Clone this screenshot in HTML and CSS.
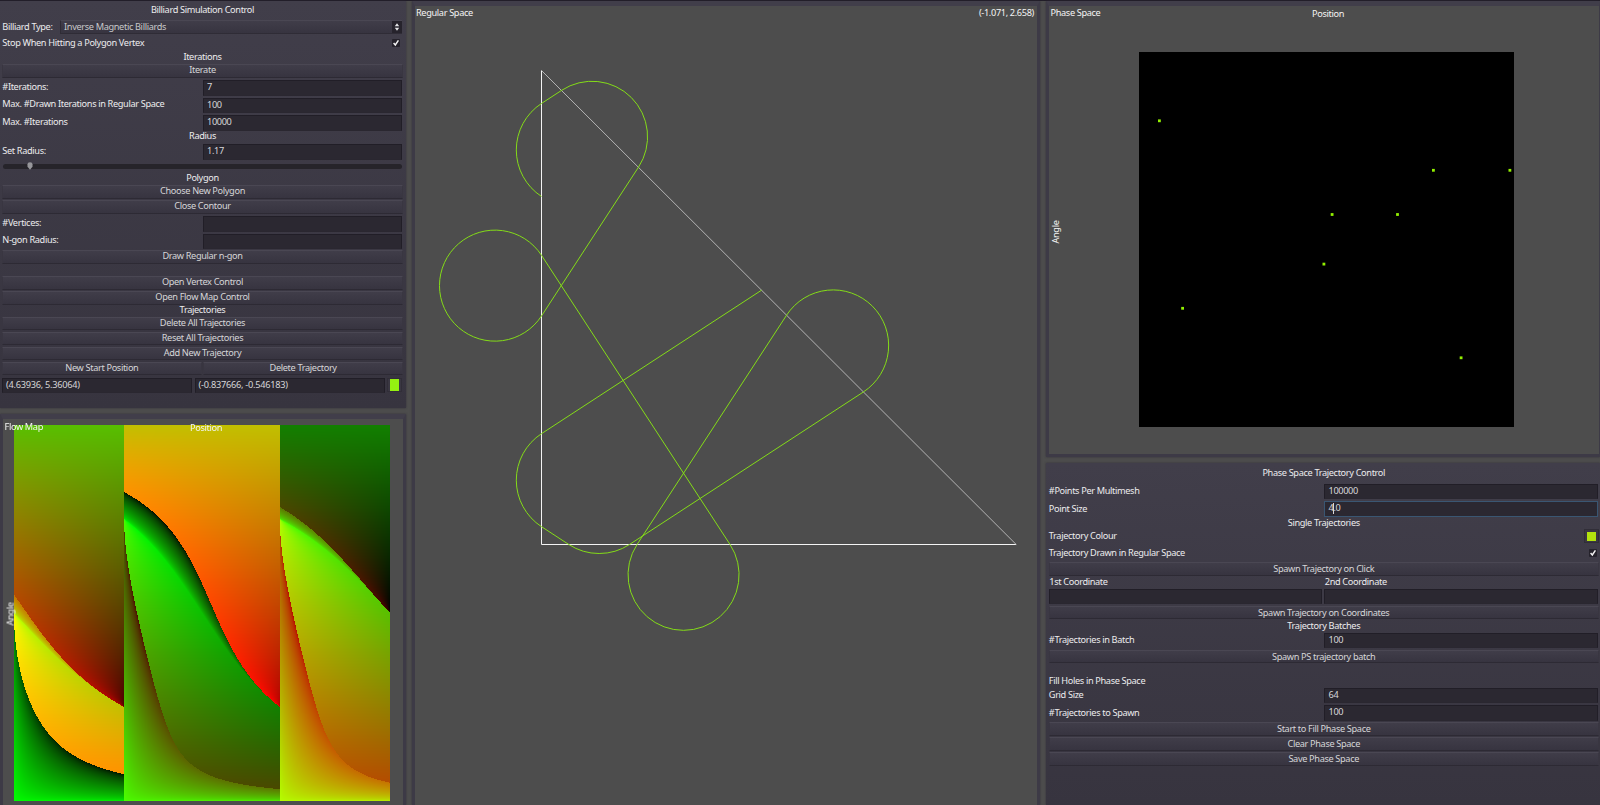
FILE: index.html
```html
<!DOCTYPE html>
<html lang="en">
<head>
<meta charset="utf-8">
<title>Billiard Simulation</title>
<link rel="stylesheet" href="styles.css">
</head>
<body>
<main class="app">
  <div class="column left">
    <section class="panel controls">
      <h1 class="title">Billiard Simulation Control</h1>
      <div class="row type"><label>Billiard Type:</label><div class="select"><span>Inverse Magnetic Billiards</span><i class="spin"><svg width="10" height="12" viewBox="0 0 10 12"><path d="M5 2.2 7.2 5.2H2.8zM5 9.8 7.2 6.8H2.8z"/></svg></i></div></div>
      <div class="row check"><label>Stop When Hitting a Polygon Vertex</label><i class="tick"><svg width="8" height="8" viewBox="0 0 8 8"><path d="M1.6 4.1 3.3 6 6.4 1.4"/></svg></i></div>
      <h2 class="head h13">Iterations</h2>
      <button class="btn">Iterate</button>
      <div class="row field"><label>#Iterations:</label><div class="input">7</div></div>
      <div class="row field"><label>Max. #Drawn Iterations in Regular Space</label><div class="input">100</div></div>
      <div class="row field"><label>Max. #Iterations</label><div class="input">10000</div></div>
      <h2 class="head h11">Radius</h2>
      <div class="row field"><label>Set Radius:</label><div class="input">1.17</div></div>
      <div class="slider"><div class="track"><svg class="grab" width="6" height="8" viewBox="0 0 6 8"><path d="M.5 2.2Q.5.3 3 .3T5.5 2.2V4.8L3 7.7.5 4.8z"/></svg></div></div>
      <h2 class="head h13">Polygon</h2>
      <button class="btn">Choose New Polygon</button>
      <button class="btn">Close Contour</button>
      <div class="row field"><label>#Vertices:</label><div class="input"></div></div>
      <div class="row field"><label>N-gon Radius:</label><div class="input"></div></div>
      <button class="btn after-gap">Draw Regular n-gon</button>
      <button class="btn">Open Vertex Control</button>
      <button class="btn">Open Flow Map Control</button>
      <h2 class="head h10">Trajectories</h2>
      <button class="btn">Delete All Trajectories</button>
      <button class="btn">Reset All Trajectories</button>
      <button class="btn">Add New Trajectory</button>
      <div class="pair"><button class="btn">New Start Position</button><button class="btn">Delete Trajectory</button></div>
      <div class="row traj"><div class="input">(4.63936, 5.36064)</div><div class="input">(-0.837666, -0.546183)</div><div class="swatch"><i class="chip lime"></i></div></div>
    </section>
    <section class="panel view flow">
      <canvas id="flow" class="flow-map" width="376" height="376"></canvas>
      <span class="tag flow-name">Flow Map</span>
      <span class="tag flow-x">Position</span>
      <span class="tag flow-y">Angle</span>
    </section>
  </div>

  <section class="panel view regular">
    <svg class="space" viewBox="415 6 621 799">
      <path class="edge" d="M541.5 70.5V544.5H1016.2"/>
      <path class="edge hyp" d="M541.5 70.5 1016.2 544.5"/>
      <path id="orbit" class="orbit"/>
    </svg>
    <span class="tag reg-name">Regular Space</span>
    <span class="tag reg-pos">(-1.071, 2.658)</span>
  </section>

  <div class="column right">
    <section class="panel view phase">
      <svg id="phase" class="phase-plot" viewBox="0 0 375 375"></svg>
      <span class="tag ph-name">Phase Space</span>
      <span class="tag ph-x">Position</span>
      <span class="tag ph-y">Angle</span>
    </section>
    <section class="panel controls wide">
      <h1 class="title">Phase Space Trajectory Control</h1>
      <div class="row field"><label>#Points Per Multimesh</label><div class="input">100000</div></div>
      <div class="row field"><label>Point Size</label><div class="input focus">4<i class="caret"></i>.0</div></div>
      <h2 class="head h10b">Single Trajectories</h2>
      <div class="row colour"><label>Trajectory Colour</label><div class="swatch"><i class="chip olive"></i></div></div>
      <div class="row check c17"><label>Trajectory Drawn in Regular Space</label><i class="tick"><svg width="8" height="8" viewBox="0 0 8 8"><path d="M1.6 4.1 3.3 6 6.4 1.4"/></svg></i></div>
      <button class="btn">Spawn Trajectory on Click</button>
      <div class="row two-labels"><label>1st Coordinate</label><label>2nd Coordinate</label></div>
      <div class="row two-inputs"><div class="input"></div><div class="input"></div></div>
      <button class="btn">Spawn Trajectory on Coordinates</button>
      <h2 class="head h11">Trajectory Batches</h2>
      <div class="row field"><label>#Trajectories in Batch</label><div class="input">100</div></div>
      <button class="btn">Spawn PS trajectory batch</button>
      <div class="row fill"><label>Fill Holes in Phase Space</label></div>
      <div class="row field"><label>Grid Size</label><div class="input">64</div></div>
      <div class="row field"><label>#Trajectories to Spawn</label><div class="input">100</div></div>
      <button class="btn">Start to Fill Phase Space</button>
      <button class="btn">Clear Phase Space</button>
      <button class="btn">Save Phase Space</button>
    </section>
  </div>
</main>
<script src="billiard.js"></script>
</body>
</html>
```
FILE: styles.css
```css
* { box-sizing: border-box; }
body {
  margin: 0;
  width: 1600px;
  height: 805px;
  overflow: hidden;
  background: #4d4d4d;
  color: #ececee;
  font-family: "Noto Sans", "Open Sans", sans-serif;
  font-size: 9.2px;
  letter-spacing: -.35px;
  line-height: 12px;
  white-space: nowrap;
}
h1, h2, button { margin: 0; font: inherit; letter-spacing: inherit; color: inherit; }
i { font-style: normal; display: block; }

.app {
  display: grid;
  grid-template-columns: 406px 628px 554px;
  column-gap: 6px;
  height: 805px;
  border-top: 1px solid #211d28;
}
.column { display: flex; flex-direction: column; min-width: 0; height: 804px; }
.left { gap: 6px; }
.right { gap: 6.5px; }

.panel { position: relative; box-shadow: 0 0 2px rgba(40, 36, 48, .7); }
.controls {
  display: flex;
  flex: none;
  flex-direction: column;
  height: 407px;
  padding: 0 3px 0 2px;
  background: linear-gradient(#413e4a, #37343f);
}
.controls.wide { height: 342px; padding: 0 1px 0 2.5px; }

.title { height: 18.6px; line-height: 18px; text-align: center; }
.wide .title { height: 19.5px; line-height: 19.5px; }
.head { display: flex; align-items: center; justify-content: center; padding-bottom: 1px; }
.wide .head { padding-bottom: 0; }
.h13 { height: 13px; }
.h11 { height: 11.5px; padding-bottom: 2px; }
.h10 { height: 10.5px; padding-bottom: 2px; }
.h10b { height: 10px; }

.row { display: flex; align-items: center; padding-right: 1px; }
.row label { padding-left: .3px; }
.field { height: 17.5px; }
.field label { flex: 1; padding-bottom: 2px; }
.wide .field label { padding-bottom: .5px; }
.input {
  height: 15.5px;
  padding-left: 3.5px;
  line-height: 11.5px;
  background: #2b2831;
  border: 1px solid #211e27;
  border-bottom-color: #2a2730;
  color: #d6d6d8;
}
.field .input { width: 199.5px; }
.wide .field .input { width: 274px; line-height: 12.6px; }
.input.focus { display: flex; border: 1px solid #3a5672; }
.caret { width: 1px; height: 11px; margin: 1px -1px 0 0; background: #d8d8da; }

.btn {
  display: block;
  flex: none;
  height: 13.5px;
  margin: 0 0 1.5px;
  padding: 0 0 2px;
  width: 100%;
  line-height: 9.5px;
  text-align: center;
  color: #d6d6d8;
  background: linear-gradient(#403d49, #373440);
  border: 1px solid #393641;
  border-top-color: #4a4753;
  border-bottom-color: #2d2a34;
}
.wide .btn { line-height: 12px; margin: .5px 0 1px; padding: 0; }
.btn.after-gap { margin-bottom: 12.5px; }
.pair { display: grid; grid-template-columns: 1fr 1fr; gap: 1.5px; }

.type { height: 15px; gap: 7px; }
.type label { padding-bottom: .5px; }
.select {
  flex: 1;
  display: flex;
  justify-content: space-between;
  height: 14px;
  padding-left: 3.5px;
  line-height: 12px;
  color: #c8c8ca;
  background: linear-gradient(#403d49, #373440);
  border: 1px solid #2f2c36;
  border-top-color: #4a4753;
  border-right: 0;
}
.spin { width: 10px; height: 12px; background: #26232c; }
.spin svg { display: block; fill: #e4e4e6; }
.check { height: 16.5px; justify-content: space-between; padding-right: 3.5px; }
.c17 { height: 17px; padding-right: 2.5px; }
.tick { width: 8px; height: 8px; background: #25222b; border-radius: 1px; }
.tick svg { display: block; fill: none; stroke: #f2f2f2; stroke-width: 1.5; }

.slider { height: 11.5px; padding: 3px 1px 0; }
.track { height: 5px; border-radius: 3px; background: #26242a; }
.grab { display: block; margin-left: 24px; position: relative; top: -1.5px; fill: #97979b; }

.traj { height: 17.5px; gap: 2.5px; }
.traj .input { flex: 1; padding-left: 3px; letter-spacing: -.25px; }
.swatch {
  display: flex;
  justify-content: center;
  align-items: center;
  width: 15px;
  height: 14px;
  background: #3a3742;
  border: 1px solid #312e38;
}
.chip { width: 9px; height: 12px; }
.lime { background: #95f011; }
.olive { background: #b3e30e; height: 9px; }
.colour { height: 17px; justify-content: space-between; padding-right: 0; }
.two-labels, .two-inputs { display: grid; grid-template-columns: 1fr 1fr; gap: 2px; }
.two-labels { height: 11.5px; padding-left: .5px; }
.two-labels label { height: 11.5px; line-height: 10px; }
.two-inputs { height: 17px; }
.fill { height: 22.5px; padding-top: 11px; }

.view {
  background: #4d4d4d;
  border: 3px solid #3d3a46;
  border-top: 5px solid #413e4a;
}
.flow { flex: 1; padding: 6.3px 0 0 11.3px; border-bottom: 0; border-right-width: 3.5px; }
.flow-map { display: block; width: 375.5px; height: 375.5px; }
.regular { height: 804px; border-bottom: 0; }
.space { display: block; width: 621px; height: 799px; }
.edge { fill: none; stroke: #f4f4f4; stroke-width: 1; }
.hyp { stroke: #b4b4b4; }
.orbit { fill: none; stroke: #84dc18; stroke-width: 1; }
.phase { height: 456px; display: flex; justify-content: center; padding: 46px 0 0 5px; border-right-width: 1px; }
.phase-plot { width: 375px; height: 375px; background: #000; }
.phase-plot rect { fill: #92f000; }

/* Captions drawn over the plots */
.tag { position: absolute; color: #f4f4f4; }
.flow-name { left: 1.5px; top: 1.6px; }
.flow-x { left: 187px; top: 3px; }
.flow-y { left: -4.500px; top: 189px; transform: rotate(-90deg); }
.reg-name { left: 1px; top: 1px; }
.reg-pos { right: 3px; top: 1px; }
.ph-name { left: 1.5px; top: 1px; }
.ph-x { left: 263px; top: 1.5px; }
.ph-y { left: -5px; top: 220px; transform: rotate(-90deg); }
```
FILE: billiard.js
```js
// Inverse magnetic billiard: straight flight inside, circular arc outside.
const R = 1.17;
const V = [[0, 0], [10, 0], [0, 10]];
const edges = [];
let total = 0;
for (let i = 0; i < 3; i++) {
  const a = V[i], b = V[(i + 1) % 3];
  const len = Math.hypot(b[0] - a[0], b[1] - a[1]);
  edges.push({ a, d: [(b[0] - a[0]) / len, (b[1] - a[1]) / len], len, s0: total });
  total += len;
}

function step(p, v, own) {
  let best = Infinity;
  edges.forEach((e, i) => {
    if (i === own) return;
    const den = v[0] * e.d[1] - v[1] * e.d[0];
    if (Math.abs(den) < 1e-12) return;
    const wx = e.a[0] - p[0], wy = e.a[1] - p[1];
    const t = (wx * e.d[1] - wy * e.d[0]) / den;
    const u = (wx * v[1] - wy * v[0]) / den;
    if (t > 1e-9 && u >= -1e-9 && u <= e.len + 1e-9 && t < best) best = t;
  });
  const q = [p[0] + best * v[0], p[1] + best * v[1]];
  const c = [q[0] - R * v[1], q[1] + R * v[0]];
  const start = Math.atan2(q[1] - c[1], q[0] - c[0]);
  let turn = Infinity, hit = null;
  edges.forEach((e, i) => {
    const wx = c[0] - e.a[0], wy = c[1] - e.a[1];
    const m = wx * e.d[0] + wy * e.d[1];
    const h = wx * e.d[1] - wy * e.d[0];
    if (Math.abs(h) >= R) return;
    const k = Math.sqrt(R * R - h * h);
    for (const u of [m - k, m + k]) {
      if (u < 0 || u > e.len) continue;
      const x = e.a[0] + u * e.d[0], y = e.a[1] + u * e.d[1];
      let w = Math.atan2(y - c[1], x - c[0]) - start;
      while (w < 0) w += 2 * Math.PI;
      if (w > 1e-6 && w < 2 * Math.PI - 1e-6 && w < turn) {
        turn = w;
        hit = { i, u, p: [x, y] };
      }
    }
  });
  if (!hit) return null;
  const cs = Math.cos(turn), sn = Math.sin(turn);
  const nv = [v[0] * cs - v[1] * sn, v[0] * sn + v[1] * cs];
  const d = edges[hit.i].d;
  return {
    exit: q, p: hit.p, v: nv, edge: hit.i, turn,
    s: (edges[hit.i].s0 + hit.u) / total,
    a: Math.acos(Math.max(-1, Math.min(1, nv[0] * d[0] + nv[1] * d[1]))) / Math.PI
  };
}

// Flow map: red is the image position, green the image angle
const cv = document.getElementById('flow');
const N = cv.width;
const ctx = cv.getContext('2d');
const img = ctx.createImageData(N, N);
for (let x = 0; x < N; x++) {
  const s = (x + 0.5) / N * total;
  let k = 2;
  while (s < edges[k].s0) k--;
  const e = edges[k], u = s - e.s0;
  const p = [e.a[0] + u * e.d[0], e.a[1] + u * e.d[1]];
  for (let y = 0; y < N; y++) {
    const t = (y + 0.5) / N * Math.PI, c = Math.cos(t), n = Math.sin(t);
    const r = step(p, [e.d[0] * c - e.d[1] * n, e.d[1] * c + e.d[0] * n], k);
    const o = (y * N + x) * 4;
    img.data[o] = r ? r.s * 255 : 0;
    img.data[o + 1] = r ? r.a * 255 : 0;
    img.data[o + 3] = 255;
  }
}
ctx.putImageData(img, 0, 0);

// Trajectory in regular space and its phase space points
const K = 47.45;
const X = x => (541.5 + x * K).toFixed(2);
const Y = y => (544.5 - y * K).toFixed(2);
let p = [4.63936, 5.36064], v = [-0.837666, -0.546183], own = 1;
let path = `M${X(p[0])} ${Y(p[1])}`;
const pts = [[(10 + Math.hypot(10 - p[0], p[1])) / total,
  Math.acos((-v[0] + v[1]) / Math.SQRT2) / Math.PI]];
for (let i = 0; i < 7; i++) {
  const r = step(p, v, own);
  path += `L${X(r.exit[0])} ${Y(r.exit[1])}A${R * K} ${R * K} 0 ${r.turn > Math.PI ? 1 : 0} 0 ${X(r.p[0])} ${Y(r.p[1])}`;
  pts.push([r.s, r.a]);
  p = r.p; v = r.v; own = r.edge;
}
document.getElementById('orbit').setAttribute('d', path);
document.getElementById('phase').innerHTML = pts.map(([a, b]) =>
  `<rect x="${(a * 375 - 1.4).toFixed(1)}" y="${(b * 375 - 1.6).toFixed(1)}" width="2.8" height="2.8"/>`).join('');
```
